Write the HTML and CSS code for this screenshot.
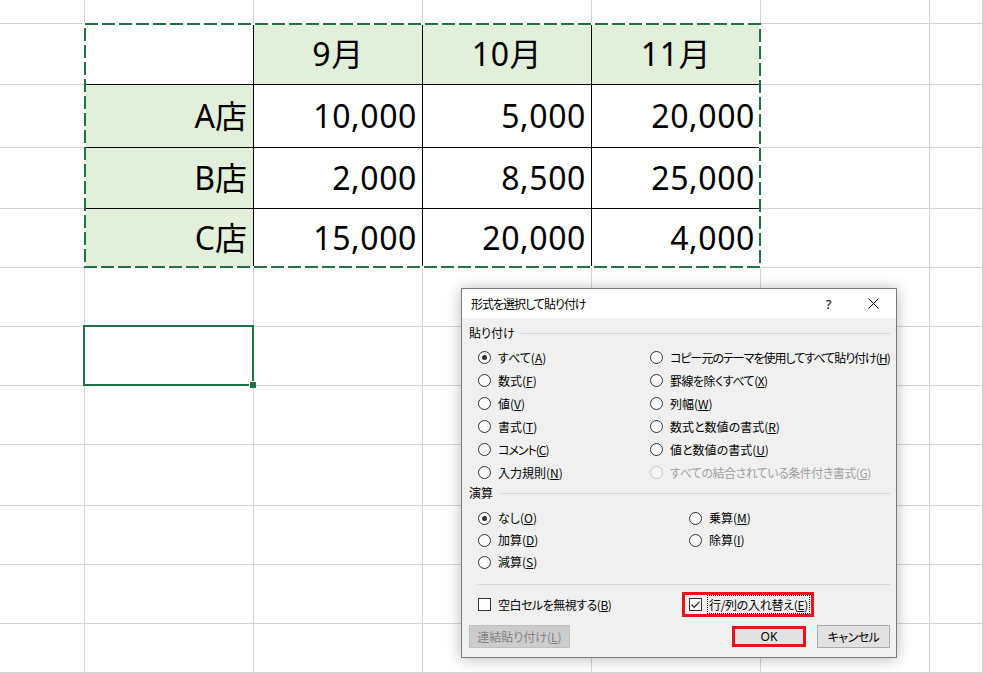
FILE: index.html
```html
<!DOCTYPE html>
<html lang="ja">
<head>
<meta charset="utf-8">
<title>形式を選択して貼り付け</title>
<link rel="stylesheet" href="styles.css">
</head>
<body>
<div class="sheet">
  <!-- row 0 -->
  <div class="c"></div><div class="c"></div><div class="c"></div><div class="c"></div><div class="c"></div><div class="c"></div><div class="c"></div>
  <!-- row 1 -->
  <div class="c"></div><div class="t blank"></div><div class="t hd">9月</div><div class="t hd">10月</div><div class="t hd">11月</div><div class="c"></div><div class="c"></div>
  <!-- row 2 -->
  <div class="c"></div><div class="t lb">A店</div><div class="t">10,000</div><div class="t">5,000</div><div class="t">20,000</div><div class="c"></div><div class="c"></div>
  <!-- row 3 -->
  <div class="c"></div><div class="t lb">B店</div><div class="t">2,000</div><div class="t">8,500</div><div class="t">25,000</div><div class="c"></div><div class="c"></div>
  <!-- row 4 -->
  <div class="c"></div><div class="t lb">C店</div><div class="t">15,000</div><div class="t">20,000</div><div class="t">4,000</div><div class="c"></div><div class="c"></div>
  <!-- row 5 -->
  <div class="c"></div><div class="c"></div><div class="c"></div><div class="c"></div><div class="c"></div><div class="c"></div><div class="c"></div>
  <!-- row 6 -->
  <div class="c"></div><div class="c sel"></div><div class="c"></div><div class="c"></div><div class="c"></div><div class="c"></div><div class="c"></div>
  <!-- row 7 -->
  <div class="c"></div><div class="c"></div><div class="c"></div><div class="c"></div><div class="c"></div><div class="c"></div><div class="c"></div>
  <!-- row 8 -->
  <div class="c"></div><div class="c"></div><div class="c"></div><div class="c"></div><div class="c"></div><div class="c"></div><div class="c"></div>
  <!-- row 9 -->
  <div class="c"></div><div class="c"></div><div class="c"></div><div class="c"></div><div class="c"></div><div class="c"></div><div class="c"></div>
  <!-- row 10 -->
  <div class="c"></div><div class="c"></div><div class="c"></div><div class="c"></div><div class="c"></div><div class="c"></div><div class="c"></div>
  <!-- row 11 -->
  <div class="c"></div><div class="c"></div><div class="c"></div><div class="c"></div><div class="c"></div><div class="c"></div><div class="c"></div>
</div>

<svg class="marquee" width="677" height="245" viewBox="0 0 677 245">
  <rect x="1" y="1" width="675" height="243" fill="none" stroke="#ffffff" stroke-width="2"/>
  <rect x="1" y="1" width="675" height="243" fill="none" stroke="#217346" stroke-width="2" stroke-dasharray="13 4"/>
</svg>

<div class="dialog">
  <div class="titlebar">
    <span class="title k1">形式を選択して貼り付け</span>
    <span class="help">?</span>
    <span class="close">
      <svg width="11" height="11" viewBox="0 0 11 11"><path d="M0.5 0.5 L10.5 10.5 M10.5 0.5 L0.5 10.5" stroke="#000" stroke-width="1" fill="none"/></svg>
    </span>
  </div>

  <div class="group"><span>貼り付け</span></div>
  <div class="opts paste">
    <label class="radio"><span class="dot on"></span><span>すべて(<u>A</u>)</span></label>
    <label class="radio"><span class="dot"></span><span class="k1">コピー元のテーマを使用してすべて貼り付け(<u>H</u>)</span></label>
    <label class="radio"><span class="dot"></span><span>数式(<u>F</u>)</span></label>
    <label class="radio"><span class="dot"></span><span class="k05">罫線を除くすべて(<u>X</u>)</span></label>
    <label class="radio"><span class="dot"></span><span>値(<u>V</u>)</span></label>
    <label class="radio"><span class="dot"></span><span>列幅(<u>W</u>)</span></label>
    <label class="radio"><span class="dot"></span><span>書式(<u>T</u>)</span></label>
    <label class="radio"><span class="dot"></span><span>数式と数値の書式(<u>R</u>)</span></label>
    <label class="radio"><span class="dot"></span><span class="k1">コメント(<u>C</u>)</span></label>
    <label class="radio"><span class="dot"></span><span>値と数値の書式(<u>U</u>)</span></label>
    <label class="radio"><span class="dot"></span><span>入力規則(<u>N</u>)</span></label>
    <label class="radio disabled"><span class="dot"></span><span class="k05">すべての結合されている条件付き書式(<u>G</u>)</span></label>
  </div>

  <div class="group op-label"><span>演算</span></div>
  <div class="opts ops">
    <label class="radio"><span class="dot on"></span><span>なし(<u>O</u>)</span></label>
    <label class="radio"><span class="dot"></span><span>乗算(<u>M</u>)</span></label>
    <label class="radio"><span class="dot"></span><span>加算(<u>D</u>)</span></label>
    <label class="radio"><span class="dot"></span><span>除算(<u>I</u>)</span></label>
    <label class="radio"><span class="dot"></span><span>減算(<u>S</u>)</span></label>
    <span></span>
  </div>

  <div class="sep"></div>

  <div class="checks">
    <label class="check skip"><span class="box"></span><span class="k05">空白セルを無視する(<u>B</u>)</span></label>
    <label class="check marked">
      <span class="box"><svg width="11" height="11" viewBox="0 0 11 11"><path d="M1.5 5.5 L4.2 8.2 L9.6 2.6" stroke="#333" stroke-width="1.3" fill="none"/></svg></span>
      <span class="focus k03">行/列の入れ替え(<u>E</u>)</span>
    </label>
  </div>

  <div class="buttons">
    <span class="btn disabled link">連結貼り付け(<u>L</u>)</span>
    <span class="btn ok">OK</span>
    <span class="btn cancel k05">キャンセル</span>
  </div>
</div>
</body>
</html>
```

FILE: styles.css
```css
* { box-sizing: border-box; }
html, body { margin: 0; padding: 0; }
body {
  width: 983px;
  height: 673px;
  overflow: hidden;
  position: relative;
  background: #ffffff;
  font-family: "Noto Sans", "Noto Sans CJK JP", sans-serif;
}

/* ---------- spreadsheet ---------- */
.sheet {
  display: grid;
  grid-template-columns: 85px 169px 169px 169px 169px 169px 1fr;
  grid-template-rows: 24px 61px 63px 61px 59px 59px 59px 59px 61px 59px 59px 1fr;
  height: 673px;
}
.c {
  border-right: 1px solid #d4d4d4;
  border-bottom: 1px solid #d4d4d4;
}
.t {
  border-right: 1px solid #000;
  border-bottom: 1px solid #000;
  font-size: 32px;
  line-height: 1;
  letter-spacing: 0.6px;
  color: #000;
  display: flex;
  align-items: center;
  justify-content: flex-end;
  padding-right: 5px;
}
.t.hd {
  justify-content: center;
  padding-right: 0;
  background: #e2efda;
}
.t.lb {
  background: #e2efda;
  padding-right: 6px;
  letter-spacing: 0;
}
.sel { position: relative; }
.sel::after {
  content: "";
  position: absolute;
  left: -2px;
  top: -2px;
  right: -1px;
  bottom: -1px;
  border: 2px solid #217346;
}
.sel::before {
  content: "";
  position: absolute;
  right: -3px;
  bottom: -3px;
  width: 6px;
  height: 6px;
  background: #217346;
  box-shadow: -1px -1px 0 #ffffff;
  z-index: 1;
}
.marquee {
  position: absolute;
  left: 84px;
  top: 23px;
}

/* ---------- dialog ---------- */
.dialog {
  position: absolute;
  left: 461px;
  top: 288px;
  width: 436px;
  height: 370px;
  border: 1px solid #7a7a7a;
  background: #f0f0f0;
  box-shadow: 0 1px 14px rgba(0, 0, 0, 0.28);
  font-family: "Noto Sans CJK JP", sans-serif;
  font-size: 12px;
  font-feature-settings: "palt";
  color: #000;
  line-height: 16px;
}
.k1 { letter-spacing: -1px; }
.k05 { letter-spacing: -0.5px; }
.k03 { letter-spacing: -0.3px; }
.titlebar {
  height: 29px;
  background: #ffffff;
  display: flex;
  align-items: center;
}
.title {
  flex: 1;
  padding-left: 9px;
}
.help {
  width: 46px;
  text-align: center;
  font-family: "Noto Sans", sans-serif;
  font-size: 13px;
  padding-left: 3px;
}
.close {
  width: 46px;
  display: flex;
  justify-content: center;
  align-items: center;
}
.group {
  display: flex;
  align-items: center;
  height: 16px;
  margin-top: 7px;
  padding-left: 7px;
  padding-right: 6px;
}
.group::after {
  content: "";
  flex: 1;
  height: 1px;
  background: #dadada;
  margin-left: 6px;
}
.op-label { margin-top: 1px; }

.opts {
  display: grid;
  padding-left: 16px;
}
.paste {
  margin-top: 5px;
  grid-template-columns: 172px auto;
  grid-auto-rows: 23px;
}
.ops {
  margin-top: 6px;
  grid-template-columns: 211px auto;
  grid-auto-rows: 22px;
}
.radio {
  display: flex;
  align-items: center;
  gap: 7px;
  white-space: nowrap;
}
.dot {
  width: 13px;
  height: 13px;
  border: 1px solid #333;
  border-radius: 50%;
  background: #ffffff;
  display: flex;
  align-items: center;
  justify-content: center;
  flex: none;
}
.dot.on::after {
  content: "";
  width: 5px;
  height: 5px;
  border-radius: 50%;
  background: #333;
}
.radio.disabled { color: #a0a0a0; }
.radio.disabled .dot { border-color: #c8c8c8; background: #f7f7f7; }

.sep {
  height: 1px;
  background: #dadada;
  margin: 11px 6px 0 15px;
}

.checks {
  display: flex;
  align-items: center;
  margin-top: 7px;
  padding-left: 16px;
  height: 25px;
}
.check {
  display: flex;
  align-items: center;
  white-space: nowrap;
}
.skip {
  width: 204px;
  gap: 7px;
}
.box {
  width: 13px;
  height: 13px;
  border: 1px solid #333;
  background: #ffffff;
  display: flex;
  align-items: center;
  justify-content: center;
  flex: none;
}
.marked {
  height: 25px;
  border: 3px solid #e8141c;
  padding: 0 1px 0 4px;
  gap: 5px;
}
.focus {
  border: 1px dotted #000;
  padding: 0 1px;
  line-height: 17px;
}

.buttons {
  display: flex;
  align-items: center;
  margin-top: 8px;
  padding: 0 6px 0 7px;
  height: 23px;
}
.btn {
  display: flex;
  align-items: center;
  justify-content: center;
  height: 23px;
  border: 1px solid #adadad;
  background: #e1e1e1;
  white-space: nowrap;
}
.btn.link {
  width: 101px;
  margin-right: auto;
  background: #cccccc;
  border-color: #bfbfbf;
  color: #838383;
}
.btn.ok {
  width: 74px;
  height: 21px;
  border: 3px solid #e8141c;
  font-family: "Noto Sans", sans-serif;
}
.btn.cancel {
  width: 73px;
  margin-left: 11px;
}
```
